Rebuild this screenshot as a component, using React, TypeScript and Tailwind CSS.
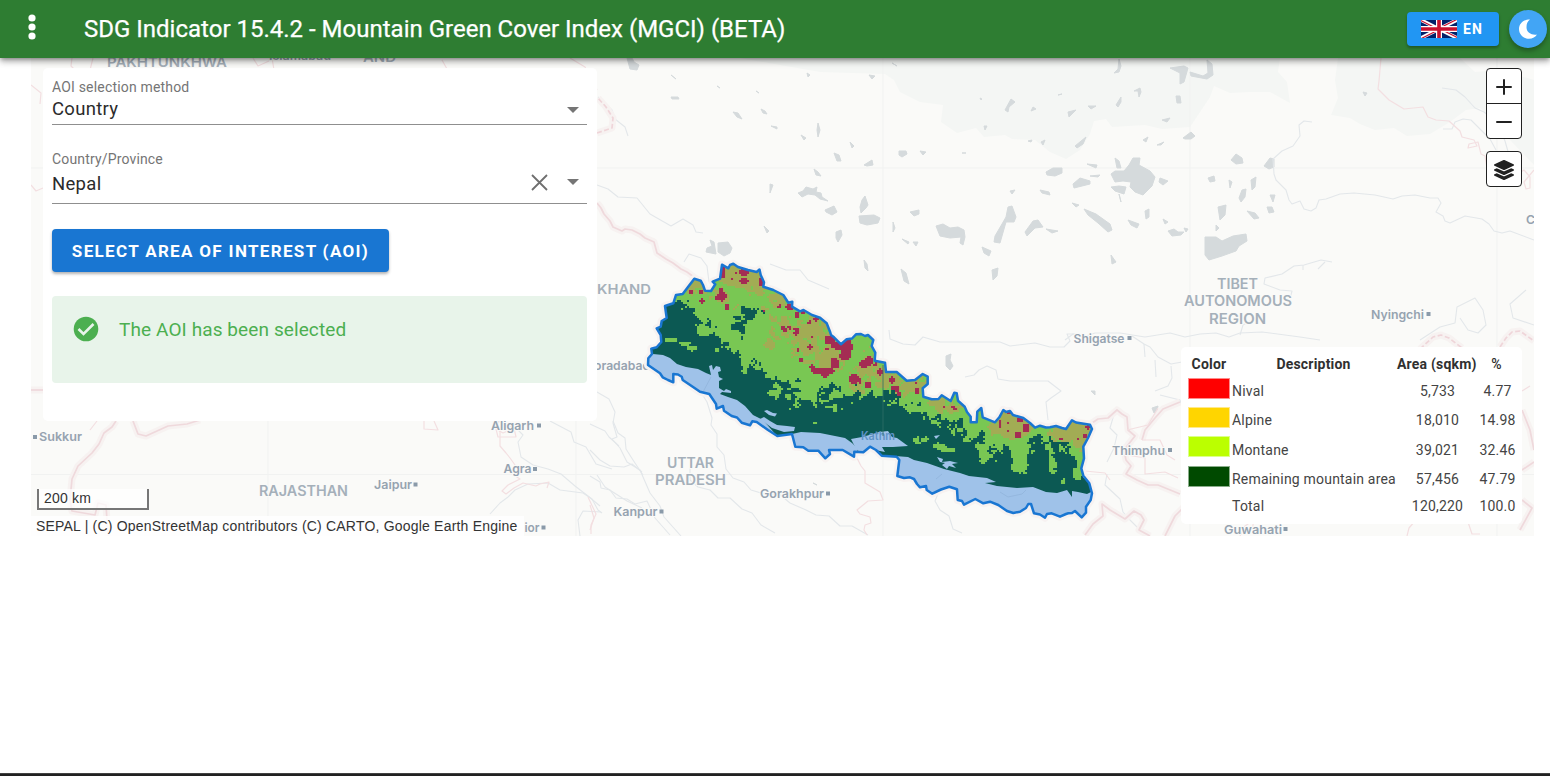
import React from "react";

type Pt = [number, number];

const NEPAL =
  "648,365 648.3,358.3 652,354 651.3,348.7 656.7,347.3 661.3,342 660.7,335 656.7,328.3 660.7,326.7 661.7,321 666.7,318 665,306 673.3,303.3 676,295 682.7,294 688,287 694.3,278.7 700.7,280.7 703,285 705,290.7 711,291 715.3,284.3 712.7,281.7 720,278.7 722,264.7 728.3,268.3 730,265 733.3,263.7 738,267 748,270 756.7,272 759.5,269.5 760.7,275 764,282.3 763.3,286.7 773.3,290 783.3,295 788.3,302.7 792.3,301.7 792,306.7 800,311.3 803.5,310 812,315 820,317.7 826.7,323.3 830,331.7 831,335 834,337.3 841,344.3 846.7,339.3 852,338.5 856,334.3 861,334 865,336 868,335 873.3,340 871.7,346 875.3,352.7 874.7,360.7 885,362.7 886,372 896.7,372 906.7,380.7 915,380 922.7,374 927.7,376.7 927.7,384 922.7,388.3 923.3,396.7 931.7,399.3 938.5,399 941.7,395.3 950.7,401 954.3,392.7 956.7,393.3 958,400.7 964.7,406.7 967,412 970.7,416.7 970.7,422.3 976.7,422.3 977.3,411.7 981.3,408 982.7,417.3 995,422.3 999.3,417.3 1003.3,410 1006,412 1010,411 1013,415 1023.3,418 1030,423 1035,427.7 1040,425.7 1046,427.5 1050,427.3 1056,426 1062,428 1066,429 1072,420.3 1076,422.5 1090,424.7 1092,429 1088,438 1083.3,446.7 1084,458.3 1081.3,468.3 1083.3,475.7 1089.3,483.3 1092,493.3 1090.7,500 1086,506.7 1086,512.7 1081.7,517.3 1075,511 1072,513 1068.3,513.3 1066,514 1060,516.7 1051.7,513.3 1047,514 1045,517.7 1040,514.5 1034,513.3 1031,504 1028.3,504 1026,508 1020,511.7 1013.3,513 1007,511 998.3,505 990,501.7 983.3,503.3 975.3,499 964,504.7 962,501 957.7,500 957,489.3 949.3,486.7 941,489.5 932.3,493.7 926.7,490 926,486 920,487.3 917,484 914,479 910,477.3 904,478 897.3,476 899.3,460 896.7,456.7 881.7,455.7 876,450 870,446.7 863.3,452.3 854.3,451.7 854,456.7 842.7,450 829,450 830,454 825.3,458.3 818.3,450.7 808.3,450.7 803.3,447.3 795.3,446.7 792,434 777.3,436 768,430 756.7,422 752.3,421.3 750,425.3 741.7,422.7 737,417.5 731.7,416 724,410.7 723,406 716.7,408.7 716,404 709.3,394 700,391.7 692.7,386.7 682.7,380 681.7,376.7 678,374.5 673.3,374 673.3,382.3 668,380 662.7,377.3 660,373.3";

const LOWLAND =
  "640,350 653,354 663,355 670,358 677,364 686,367 698,369 706,373 711,375 709,366 712,365 713,370 716,366 720,367 721,371 718,372 719,377 723,379 719,381 719,388 724,391 726,389 731,391 731,393 722,392 720,394 728,397 737,400 745,406 753,415 763,420 777,436 777,445 640,445";

const lowlands = [
  LOWLAND,
  "764,411 767,410 773,413 777,413.5 775,416.500 769,415",
  "760,419 764,417 770,421 777,425 787,426 795,427 794,431 784,432 772,428",
  "792,434 801,432 820,433 830,435 845,438 852,443 858,449 855,460 792,460",
  "851,439 862,437 873,434 879,432 888,431 892,437 897,438 908,446 893,447 882,447 885,452 875,450 869,447 861,454 855,447",
  "895,456 908,457 914,460 927,463 944,469 960,473 969,476 987,478 996,482 985,483 997,486 1017,488 1033,487 1046,492 1057,493 1067,490 1072,497 1072,491 1078,492 1087,494 1097,489 1097,524 890,524",
  "937,457 943,459 942,462 950,461 958,463 952,464 956,468 949,466 947,469 942,465 945,463 940,462",
  "934,436 940,435 936,439",
];

const greenEdge: Pt[] = [
  [640, 292], [665, 299], [680, 303], [690, 312], [700, 327], [712, 335], [720, 340], [735, 350], [745, 363],
  [760, 368], [770, 372], [775, 393], [800, 397], [820, 402], [840, 395], [860, 393], [880, 397], [900, 402],
  [920, 413], [930, 419], [950, 422], [965, 430], [975, 443], [982, 458], [990, 453], [1010, 453], [1018, 470],
  [1025, 466], [1030, 447], [1040, 440], [1047, 446], [1050, 468], [1057, 450], [1068, 445], [1076, 468], [1096, 482],
];

type Blob = [number, number, number, number, number];

const darkBlobs: Blob[] = [
  [750, 313, 14, 8, 0.56], [739, 325, 9, 14, 0.6], [708, 325, 10, 6, 0.5], [785, 382, 14, 8, 0.5],
  [828, 388, 10, 6, 0.5], [690, 310, 10, 6, 0.5], [955, 425, 24, 8, 0.55], [978, 437, 9, 9, 0.5],
  [1002, 456, 12, 9, 0.65], [1036, 452, 9, 15, 0.7], [1066, 462, 10, 13, 0.6], [1054, 443, 8, 6, 0.5],
];

const greenBlobs: Blob[] = [
  [671, 340, 8, 1, 1], [685, 343.5, 6, 1.5, 1], [692, 348, 4.5, 2.5, 0.9], [704, 331, 8, 4, 0.8], [921, 440, 8, 4, 0.55],
  [940, 446, 6, 3, 0.8], [948, 450, 6, 2, 0.9], [967, 438, 5, 9, 0.5], [774, 393, 6, 3, 0.9], [831, 407, 5, 1, 1], [835, 408, 0.8, 5, 1],
  [790, 409, 0.8, 1, 1], [815, 423, 0.8, 2, 1], [744, 371, 3, 3, 0.8], [1020, 467, 9, 5, 0.7], [1053, 466, 4, 7, 0.7],
  [1063, 483, 0.8, 6, 0.9], [1078, 474, 5, 5, 0.7], [984, 461, 5, 2, 0.6], [717, 350, 1, 1, 1], [842, 409, 1, 1, 1],
];

const oliveBlobs: Blob[] = [
  [740, 272, 24, 14, 1], [757, 284, 14, 12, 0.8], [783, 299, 17, 11, 0.7], [698, 288, 12, 9, 0.55],
  [718, 295, 12, 9, 0.55], [781, 326, 12, 13, 0.62], [798, 333, 15, 13, 0.65], [819, 327, 14, 14, 0.8],
  [810, 350, 20, 13, 0.65], [830, 357, 17, 15, 0.85], [767, 345, 7, 6, 0.5], [735, 308, 6, 4, 0.3],
  [770, 310, 9, 7, 0.5], [860, 380, 11, 13, 0.65], [870, 363, 9, 15, 0.75], [886, 378, 13, 11, 0.8],
  [903, 385, 14, 7, 0.65], [919, 384, 9, 9, 0.65], [897, 394, 12, 5, 0.5], [945, 405, 17, 8, 0.65],
  [1012, 424, 20, 14, 1], [997, 430, 10, 7, 0.6], [1062, 435, 14, 8, 0.75], [1080, 430, 12, 10, 1], [1082, 443, 8, 8, 0.8],
];

const redBlobs: Blob[] = [
  [744, 272, 4, 3, 1], [744, 281, 4, 3, 0.9], [723, 272, 1.5, 5, 1], [761, 282, 1.5, 3, 0.9], [721, 297, 5, 4, 0.6],
  [732, 279, 1, 1, 1], [701, 292, 1.5, 2, 1], [727, 307, 2, 2, 0.8], [702, 301, 2, 2, 0.7], [691, 292, 2, 1.5, 0.7],
  [721, 290, 1.5, 1.5, 1], [790, 307, 4, 2, 0.9], [797, 315, 1, 3, 1], [803, 312, 2, 2, 0.7], [816, 319, 3, 1.5, 0.8],
  [785, 329, 4, 3, 0.65], [796, 331, 2, 4, 0.6], [830, 340, 5, 4, 0.9], [838, 346, 6, 3, 0.9], [847, 347, 5, 7, 1],
  [845, 355, 5, 4, 0.9], [835, 363, 4, 5, 0.75], [823, 371, 11, 3, 0.75], [812, 367, 2, 1.5, 1], [825, 375, 4, 1.5, 0.8],
  [854, 379, 5, 4, 0.85], [865, 364, 5, 3, 0.9], [869, 361, 3.5, 4.5, 0.9], [868, 385, 3, 2, 1], [860, 381, 1, 3, 0.9],
  [880, 372, 1.5, 3, 1], [892, 380, 2, 3, 0.9], [895, 389, 3, 3, 0.9], [899, 394, 2, 2, 0.9], [916, 383, 1, 1, 1],
  [917, 391, 1, 2, 0.9], [944, 407, 1, 1, 1], [953, 407, 1, 1, 1], [1026, 428, 3, 3.5, 0.95], [1020, 420, 2, 2, 1],
  [1000, 424, 1, 4, 0.9], [1018, 435, 3, 2, 0.7], [1088, 427, 2, 2, 1], [1085, 436, 1, 1.5, 1], [1009, 413, 1.5, 1, 1],
  [810, 347, 2, 2, 0.6], [812, 337, 1, 1, 1], [798, 350, 1, 1, 1], [801, 360, 1.5, 1, 1],
];

const hash = (x: number, y: number) => {
  const v = Math.sin(x * 127.1 + y * 311.7) * 43758.5453;
  return v - Math.floor(v);
};

const smooth = (x: number, y: number) => {
  const ix = Math.floor(x);
  const iy = Math.floor(y);
  const fx = x - ix;
  const fy = y - iy;
  const top = hash(ix, iy) * (1 - fx) + hash(ix + 1, iy) * fx;
  const bottom = hash(ix, iy + 1) * (1 - fx) + hash(ix + 1, iy + 1) * fx;
  return top * (1 - fy) + bottom * fy;
};

const edgeAt = (x: number) => {
  for (let i = 1; i < greenEdge.length; i++) {
    if (x <= greenEdge[i][0]) {
      const [x0, y0] = greenEdge[i - 1];
      const [x1, y1] = greenEdge[i];
      return y0 + ((x - x0) / (x1 - x0)) * (y1 - y0);
    }
  }
  return greenEdge[greenEdge.length - 1][1];
};

const CELL = 2;

function inBlobs(blobs: Blob[], x: number, y: number, noise: number) {
  return blobs.some(([cx, cy, rx, ry, p]) => {
    const d = ((x - cx) / (rx + 0.5)) ** 2 + ((y - cy) / (ry + 0.5)) ** 2;
    return d < 1.1 && noise < p * (p === 1 ? 1.1 - d * 0.25 : 1.15 - d * 0.45);
  });
}

function buildCover() {
  let green = "";
  let olive = "";
  let red = "";
  for (let i = 0; i < 226; i++) {
    for (let j = 0; j < 124; j++) {
      const px = 645 + i * CELL;
      const py = 262 + j * CELL;
      const x = px + CELL / 2;
      const y = py + CELL / 2;
      const n = smooth(i / 2.1, j / 2.1) * 0.75 + hash(i + 71, j + 13) * 0.25;
      const edge = edgeAt(x) + (n - 0.5) * 30;
      let isGreen = y < edge;
      if (isGreen && inBlobs(darkBlobs, x, y, n * 1.1)) isGreen = false;
      if (inBlobs(greenBlobs, x, y, n)) isGreen = true;
      if (!isGreen) continue;
      const cell = `M${px} ${py}h2.05v2.05h-2.05z`;
      green += cell;
      const m = smooth(i / 1.9 + 40, j / 1.9 + 9) * 0.8 + hash(i + 5, j + 90) * 0.2;
      const r = smooth(i / 1.6 + 131, j / 1.6 + 57);
      if (inBlobs(redBlobs, x, y, m * 0.45 + r * 0.45)) red += cell;
      else if (inBlobs(oliveBlobs, x, y, m * 1.1)) {
        if (r > 0.9) red += cell;
        else olive += cell;
      }
    }
  }
  return { green, olive, red };
}

const cover = buildCover();

const lakes = [
  "627,58 630,69 637,70 639,65 634,62 632,58", "671,97 678,97 679,99 672,99", "733,112 738,113 742,119 737,117",
  "761,109 765,111 767,114 763,113", "771,126 777,127 777,129", "818,123 820,130 818,137 817,130", "801,135 806,138 804,140",
  "834,153 839,155 841,161 837,161", "850,142 854,146 852,148", "864,165 872,160 873,165 867,166",
  "814,169 818,172 821,176 816,175", "798,193 803,191 806,187 813,189 817,187 816,192 821,193 822,197 828,201 820,199 815,195 808,194 802,197",
  "770,184 773,185 770,193", "825,210 834,206 837,212 832,215 826,212", "862,200 865,196 868,205 866,208 861,213 860,207",
  "859,216 874,215 880,218 878,223 867,225 860,223", "836,232 841,230 842,235 838,242 836,238",
  "710,240 714,242 716,254 706,252 707,248 712,246", "718,243 728,242 732,248 730,253 724,256 718,252",
  "764,226 769,231 767,233", "864,260 867,264 868,271 865,268", "901,269 906,273 909,284 904,281",
  "899,151 906,151 907,154 902,157 899,155", "920,151 926,152 923,155", "910,212 919,210 919,214 914,216",
  "893,222 895,228 893,232", "902,239 909,242 908,244", "913,242 918,242 916,246", "936,226 943,224 950,228 958,227 964,230 965,237 963,245 960,243 961,237 950,238 940,236",
  "1008,207 1012,206 1016,217 1014,222 1006,222 1000,243 994,242 995,236 1002,224 1006,217",
  "1025,232 1033,221 1038,220 1043,227 1035,228 1027,236", "1046,229 1058,231 1052,233",
  "992,270 998,268 997,276 993,280", "982,247 991,251 989,256 984,253", "1046,172 1053,168 1062,168 1062,173 1055,176 1047,175",
  "1011,99 1015,102 1009,107 1008,112 1005,110", "980,98 982,99 981,100", "1033,107 1036,109 1031,111", "984,126 987,126 985,130",
  "1028,141 1032,140 1031,142", "1041,142 1045,140 1043,145", "1040,190 1049,192 1050,195 1042,193", "1010,191 1015,190 1012,194",
  "1119,59 1121,66 1119,72 1114,73 1118,69", "1170,68 1184,66 1188,68 1184,82 1180,84 1180,73",
  "1190,72 1203,76 1208,73 1207,60 1212,64 1213,75 1207,79 1191,76", "1134,91 1140,88 1141,92 1139,97 1138,91",
  "1176,96 1180,96 1181,103 1177,103", "1116,105 1121,97 1121,102 1118,107", "1088,106 1096,106 1091,109",
  "1068,112 1076,110 1069,117", "1162,120 1170,118 1167,122", "1075,146 1086,137 1083,144 1077,148",
  "1183,138 1191,132 1195,136 1191,139 1185,139", "1143,140 1148,137 1146,142", "1157,145 1164,142 1161,145",
  "1111,174 1115,171 1124,171 1129,165 1133,158 1140,158 1139,165 1150,171 1155,177 1152,186 1148,190 1143,195 1135,192 1130,187 1131,182 1123,181 1115,182",
  "1115,158 1119,161 1121,168 1117,168", "1111,187 1119,186 1126,187 1124,194 1115,191", "1119,194 1121,202",
  "1073,184 1080,178 1090,181 1090,184 1082,186 1074,188", "1087,164 1097,165 1096,168", "1090,176 1100,175 1098,177",
  "1160,178 1168,181 1163,185 1159,182", "1072,203 1079,205 1076,207", "1084,209 1096,214 1110,224 1112,230 1108,232 1098,223 1088,215",
  "1145,211 1149,209 1149,217 1146,219", "1128,220 1139,224 1137,228 1131,225", "1163,219 1168,222 1165,224",
  "1168,231 1174,229 1178,232 1184,232 1181,235 1172,236", "1184,228 1188,229 1186,232",
  "1231,160 1236,154 1242,158 1243,163 1236,164", "1264,166 1270,158 1274,159 1274,167 1269,169",
  "1208,178 1214,176 1215,181 1210,182", "1229,180 1232,182 1230,188", "1251,180 1256,177 1255,187 1252,190",
  "1242,190 1246,189 1245,197 1241,202 1239,198", "1270,195 1275,195 1273,202", "1267,207 1272,207 1274,212 1269,213",
  "1218,207 1226,205 1225,215 1220,220", "1247,211 1255,213 1259,218 1254,219", "1216,225 1219,228 1216,231",
  "1205,237 1216,237 1222,241 1233,236 1246,234 1247,241 1239,246 1236,251 1222,256 1209,260 1205,255",
  "1111,255 1116,262 1112,264", "1363,92 1367,93 1365,96", "946,356 951,354 950,360 953,366 950,370 946,366", "1091,391 1095,391 1095,395",
  "1152,408 1158,406 1157,411 1154,413", "807,73 810,75 808,77", "869,75 875,76 872,79", "892,63 897,66", "671,75 676,79",
  "717,86 720,88", "756,91 759,93", "1058,95 1062,94", "962,153 966,153", "813,483 817,485",
];

const rivers = [
  "597,185 608,189 618,197 637,198 650,214 671,226 683,219 693,225 696,232 703,233",
  "684,262 689,254 701,258 707,266 709,282", "770,264 786,270 800,270 808,280 829,289",
  "598,97 605,103 612,110 615,119 625,127 628,136",
  "702,394 707,402 712,418 711,425 717,434 717,447 724,455 726,469 733,478 744,482 751,490 768,495 778,493 790,503 806,510 816,515 829,516 840,526 852,526 868,535",
  "590,388 609,399 615,412 613,423 617,437 612,439 620,448 627,462 640,470 650,493 660,506 664,517 681,536",
  "590,424 605,431 609,437 619,446", "590,450 600,460 610,466 624,467 632,464 642,472",
  "590,476 600,482 601,488 610,490 616,498 627,499 635,504 647,501 655,518 670,535",
  "690,468 690,480 698,487 710,490 718,498 730,498 742,509 752,513 761,525 775,533",
  "498,421 518,430 523,435 518,442 521,457 533,465 548,469 561,474 575,486 588,496 600,506",
  "550,421 571,432 574,442 586,447 596,464 612,469", "597,475 605,487 627,501 642,508",
  "490,514 500,503 508,497 515,490 528,484 548,483 560,490 583,493 592,499 598,510 602,513",
  "613,421 618,433 625,438 626,449 633,460 643,475", "580,536 578,520 583,511 601,512",
  "936,479 942,484 935,501 940,510 949,516 953,529 962,533",
  "889,330 890,339 903,344 915,345 923,337 940,342 1000,342 1010,346 1035,343 1050,347 1064,347 1070,341 1067,334 1080,334",
  "1065,340 1073,334 1083,337 1095,333 1120,333 1145,337 1170,333 1185,337 1200,334 1216,333 1229,337 1240,333 1262,332 1300,337 1320,340",
  "965,377 974,375 979,370 987,366 996,370 998,379 1010,381 1048,381 1061,391 1051,398 1046,402 1048,420",
  "1312,122 1304,121 1299,125 1300,136 1293,146 1282,151 1273,159 1274,174 1276,180 1286,190 1289,200 1292,204 1300,201 1304,209 1311,211 1316,208 1319,200 1326,199 1340,194 1354,193 1375,195 1393,199 1402,196 1415,195 1430,198 1438,198 1441,203 1436,212 1443,216 1445,221 1450,223 1465,216 1482,219 1489,224 1494,231 1502,233 1510,231 1534,240",
  "1442,88 1456,90 1465,97 1475,108 1484,112 1497,122 1505,141 1509,155",
  "1443,129 1452,129 1455,122 1463,119 1471,120 1480,129 1490,139 1496,150",
  "1332,262 1321,260 1304,265 1294,266 1282,274 1265,278 1264,284 1280,290 1292,291 1290,299",
  "1240,335 1243,325 1250,321", "1303,265 1303,270", "1325,262 1318,269",
  "1420,340 1440,327 1455,323 1457,307 1469,301 1475,298 1483,310 1486,325 1478,333 1468,330 1460,318",
  "1132,336 1144,344 1150,347 1158,357 1171,364 1182,362", "1144,344 1145,357", "1171,366 1172,378 1168,386 1155,391",
  "1155,360 1156,377", "1115,411 1110,428 1117,435 1114,448 1107,462", "1107,474 1105,485 1120,499 1123,512 1130,520 1142,532",
  "1160,395 1180,400 1184,412", "1526,290 1510,304 1513,318 1534,325",
];

const bordersWide = [
  "116,421 112,427 104,433 99,444 92,453 78,466 72,479 70,500 72,511 95,515 98,503 106,505 108,536",
  "133,421 138,434 146,436 168,426 187,424 200,420",
  "31,390 43,390",
  "597,203 601,208 604,214 610,221 613,227 622,231 625,229 632,230 640,234 645,238 654,242 657,253 666,259 673,263 681,269 687,272 698,280",
  "1092,423 1098,419 1108,418 1117,410 1122,414 1127,417 1128,430 1135,436 1124,450 1126,460 1131,466 1126,474 1137,480 1148,485 1158,485 1180,494",
  "1142,440 1145,430 1155,418 1163,409 1180,402",
  "1085,535 1093,524 1103,516 1102,504 1110,510 1125,519 1134,511 1141,515 1144,520 1139,530 1150,536",
  "1165,536 1175,516 1187,504", "1522,410 1530,430 1534,450", "1522,470 1534,462", "1522,500 1532,508 1520,530",
];

const bordersDashed = [
  "597,133 606,130 612,128 613,118 606,107 598,98",
  "1420,349 1433,337 1441,335 1449,338 1462,348",
  "1500,347 1506,338 1512,332 1520,331 1527,336 1534,341",
];

const bordersThin = [
  "1381,58 1379,81 1378,89 1389,100 1404,109 1423,107 1428,117 1436,120 1449,121 1460,131 1462,137 1474,140 1477,146 1468,148 1469,144 1478,142 1481,154 1485,156 1487,168 1496,180",
  "1519,173 1524,170 1530,177 1530,188 1526,189 1524,182 1534,170", "857,458 861,466 865,471 865,483 880,492 883,500 868,501 857,510 860,514 870,517 871,523 865,525 864,530 867,535",
  "1085,471 1105,473 1110,480",
  "499,419 496,429 503,433 514,428 516,437 498,437 495,425", "496,425 500,432 500,446 506,453 510,458 515,465 512,474 520,479 508,485 502,491 506,494 514,488 523,483 536,486 540,484 549,482 547,488",
  "588,497 596,514 591,525 591,534",
  "424,421 424,429 438,430 434,421", "31,85 41,93 40,104", "93,58 90,70 102,75", "72,58 71,66 77,72", "442,60 447,69 456,70",
  "31,185 36,191 43,188", "1127,430 1148,425 1158,408", "1127,455 1145,458 1145,474 1165,472 1178,478", "1142,440 1160,440 1167,455 1175,460",
  "570,58 585,67 597,90", "253,58 258,66 269,61", "1522,391 1530,386", "1240,536 1245,526 1254,520 1252,530",
  "1407,536 1409,528 1415,521", "1468,522 1472,534 1480,534", "590,505 594,518 590,530", "97,421 90,430", "272,58 274,70 281,74",
];

interface Label {
  text: string;
  x: number;
  y: number;
  w: number;
  size: number;
  region?: boolean;
}

const labels: Label[] = [
  { text: "PAKHTUNKHWA", x: 107, y: 67, w: 120, size: 13, region: true },
  { text: "Islamabad", x: 269, y: 60, w: 62, size: 12 },
  { text: "AND", x: 363, y: 62, w: 33, size: 13, region: true },
  { text: "KHAND", x: 597, y: 294, w: 54, size: 13.5, region: true },
  { text: "oradabad", x: 594, y: 370, w: 56, size: 12 },
  { text: "TIBET", x: 1217, y: 289, w: 41, size: 14, region: true },
  { text: "AUTONOMOUS", x: 1184, y: 306, w: 108, size: 14, region: true },
  { text: "REGION", x: 1209, y: 323.5, w: 57, size: 14, region: true },
  { text: "UTTAR", x: 667, y: 467.5, w: 47, size: 14, region: true },
  { text: "PRADESH", x: 655, y: 484.5, w: 71, size: 14, region: true },
  { text: "RAJASTHAN", x: 259, y: 495.5, w: 89, size: 14, region: true },
  { text: "Sukkur", x: 39, y: 441, w: 43, size: 12 },
  { text: "Aligarh", x: 491, y: 429.5, w: 43, size: 12 },
  { text: "Agra", x: 503.5, y: 473, w: 28, size: 12 },
  { text: "Jaipur", x: 374, y: 488.5, w: 38, size: 12 },
  { text: "Kanpur", x: 613.5, y: 516, w: 44, size: 12 },
  { text: "Gorakhpur", x: 760, y: 497.5, w: 64, size: 12 },
  { text: "ior", x: 524.5, y: 532, w: 15, size: 12 },
  { text: "Shigatse", x: 1073.5, y: 343, w: 51, size: 12 },
  { text: "Nyingchi", x: 1371, y: 319, w: 53, size: 12 },
  { text: "Thimphu", x: 1112, y: 455, w: 53, size: 12 },
  { text: "Guwahati", x: 1224, y: 533.5, w: 58, size: 12 },
  { text: "C", x: 1526, y: 224, w: 9, size: 12 },
];

const towns: Pt[] = [
  [35, 437], [539, 425.5], [535, 469], [415.5, 484.5], [661.5, 511.5], [828, 493.5], [543.5, 527.5], [1129.5, 338],
  [1428.5, 314], [1170, 450], [1285.5, 529],
];

function BaseMap() {
  return (
    <svg className="block h-[478px] w-[1503px]" viewBox="31 58 1503 478" aria-hidden="true">
      <defs>
        <clipPath id="country">
          <polygon points={NEPAL} />
        </clipPath>
      </defs>
      <rect x="31" y="58" width="1503" height="478" fill="#fafaf8" />
      <path
        fill="#f4f6f4"
        d="M740 58L780 65L820 72L885 74L894 80L900 92L920 102L943 105L941 122L957 133L976 128L984 137L1005 135L1012 139L1035 140L1050 152L1066 159L1080 150L1090 134L1094 121L1106 119L1112 127L1145 125L1162 129L1190 127L1200 112L1210 97L1214 86L1230 93L1250 92L1270 92L1290 103L1287 82L1278 72L1280 58ZM1338 58L1335 80L1338 98L1331 115L1350 118L1360 124L1375 130L1394 128L1407 136L1430 134L1450 122L1466 110L1480 108L1497 122L1510 140L1534 165V80L1500 70L1475 72L1460 58Z"
      />
      <path d="M268 421V536M576 421V536M883 58V536M1190 58V536M1497 58V536M31 168H1534M31 474.500H1534" stroke="#f1f2f1" strokeWidth="1" />
      <g fill="#d5dadc" stroke="#d5dadc" strokeWidth="1" strokeLinejoin="round">
        {lakes.map((p) => (
          <polygon key={p} points={p} />
        ))}
      </g>
      <g fill="none" stroke="#e3e7ea" strokeWidth="1.1" strokeLinejoin="round">
        {rivers.map((p) => (
          <polyline key={p} points={p} />
        ))}
      </g>
      <g fill="none" strokeLinejoin="round">
        {bordersWide.map((p) => (
          <g key={p}>
            <polyline points={p} stroke="#f7f2f1" strokeWidth="7" />
            <polyline points={p} stroke="#efd9dc" strokeWidth="1.7" />
          </g>
        ))}
        {bordersDashed.map((p) => (
          <g key={p}>
            <polyline points={p} stroke="#f7f2f1" strokeWidth="7" />
            <polyline points={p} stroke="#efd5d9" strokeWidth="1.7" strokeDasharray="5 2.5" />
          </g>
        ))}
        {bordersThin.map((p) => (
          <polyline key={p} points={p} stroke="#f3dfe1" strokeWidth="1.2" />
        ))}
      </g>

      <g fontFamily="Inter, 'Open Sans', sans-serif" stroke="#fafaf8" strokeWidth="2" paintOrder="stroke" strokeLinejoin="round">
        {labels.map((l) => (
          <text
            key={l.text}
            x={l.x}
            y={l.y}
            fontSize={l.size}
            fontWeight={l.region ? 600 : 600}
            fill={l.region ? "#a5b0ba" : "#96a3b0"}
            textLength={l.w}
            lengthAdjust="spacingAndGlyphs"
          >
            {l.text}
          </text>
        ))}
      </g>
      {towns.map(([x, y]) => (
        <rect key={`${x}-${y}`} x={x - 2} y={y - 2} width="4" height="4" fill="#8a9aa9" />
      ))}

      <polygon points={NEPAL} fill="none" stroke="#f7f2f1" strokeWidth="8" strokeLinejoin="round" />
      <g clipPath="url(#country)">
        <polygon points={NEPAL} fill="#0c5953" />
        <g fill="#9fc2e9">
          {lowlands.map((p) => (
            <polygon key={p} points={p} />
          ))}
        </g>
        <path d="M711 377L703 392M936 479L942 474M1000 492L1008 497L1022 494L1026 490" fill="none" stroke="#94b7de" strokeWidth="1" />
        <path d={cover.green} fill="#79c753" />
        <path d={cover.olive} fill="#a2ac54" />
        <path d={cover.red} fill="#a42c53" />
        <text x="861" y="440" fontSize="12" fontWeight="600" fontFamily="Inter, sans-serif" fill="#5f93c6" textLength="34" lengthAdjust="spacingAndGlyphs">
          Kathm
        </text>
        <path d="M883 365V436" stroke="#2f7068" strokeWidth="0.8" />
      </g>
      <polygon points={NEPAL} fill="none" stroke="#1976d2" strokeWidth="2.5" strokeLinejoin="round" />
    </svg>
  );
}

function UnionJack() {
  return (
    <svg className="h-[18px] w-9" viewBox="0 0 60 30" preserveAspectRatio="none">
      <clipPath id="jack">
        <path d="M30 15H60V30ZM30 15V30H0ZM30 15H0V0ZM30 15V0H60Z" />
      </clipPath>
      <path d="M0 0H60V30H0Z" fill="#012169" />
      <path d="M0 0L60 30M60 0L0 30" stroke="#fff" strokeWidth="6" />
      <path d="M0 0L60 30M60 0L0 30" clipPath="url(#jack)" stroke="#c8102e" strokeWidth="4" />
      <path d="M30 0V30M0 15H60" stroke="#fff" strokeWidth="10" />
      <path d="M30 0V30M0 15H60" stroke="#c8102e" strokeWidth="6" />
    </svg>
  );
}

function Header() {
  return (
    <header className="relative z-10 flex h-[58px] items-center bg-[#2e7d32] pr-[3px] text-white shadow-[0_2px_4px_-1px_rgba(0,0,0,0.3),0_4px_6px_rgba(0,0,0,0.2),0_1px_10px_rgba(0,0,0,0.14)]">
      <button className="-mt-[4px] ml-[26px] flex h-10 w-3 items-center justify-center" aria-label="Menu">
        <svg width="12" height="28" viewBox="0 0 12 28" fill="#fff">
          <circle cx="6" cy="5" r="3.6" />
          <circle cx="6" cy="14" r="3.6" />
          <circle cx="6" cy="23" r="3.6" />
        </svg>
      </button>
      <h1 className="ml-[46px] whitespace-nowrap text-[24px] leading-[58px] [-webkit-text-stroke:0.25px_white]">
        SDG Indicator 15.4.2 - Mountain Green Cover Index (MGCI) (BETA)
      </h1>
      <div className="ml-auto flex items-center gap-[10px]">
        <button className="flex h-[34px] w-[92px] items-center gap-[6px] rounded-[4px] bg-[#2196f3] pl-[14px] text-[14px] font-bold tracking-[1.2px] shadow-[0_2px_3px_rgba(0,0,0,0.3)]">
          <UnionJack />
          EN
        </button>
        <button className="flex size-[38px] items-center justify-center rounded-full bg-[#42a5f5] shadow-[0_3px_5px_rgba(0,0,0,0.3)]" aria-label="Theme">
          <svg width="20" height="22" viewBox="0 0 20 22">
            <path d="M12 1.500C5.500 1.500 1 5.600 1 11s4.300 9.800 10 9.800c3.600 0 6.500-1.700 8-4.300-5 1-10.500-1.900-10.500-7.300C8.500 5.800 9.500 3.400 12 1.500Z" fill="#fff" />
          </svg>
        </button>
      </div>
    </header>
  );
}

function Caret() {
  return (
    <svg width="12" height="6" viewBox="0 0 12 6">
      <path d="M0 0H12L6 6Z" fill="#757575" />
    </svg>
  );
}

function AoiPanel() {
  return (
    <section className="absolute left-[12px] top-[10px] h-[353px] w-[554px] rounded-[5px] bg-white px-[9px] pr-[10px] pt-[10px]">
      <div className="h-[47px] border-b border-[#8f8f8f]">
        <div className="text-[14px] leading-[18px] tracking-[0.18px] text-[#757575]">AOI selection method</div>
        <div className="flex items-center justify-between pr-2 pt-px">
          <span className="text-[18.500px] leading-[25px] tracking-[0.3px] text-[#2b2b2b]">Country</span>
          <Caret />
        </div>
      </div>
      <div className="mt-[25px] h-[54px] border-b border-[#8f8f8f]">
        <div className="text-[14px] leading-[18px] tracking-[0.16px] text-[#757575]">Country/Province</div>
        <div className="mt-[2px] flex h-7 items-start pr-2">
          <span className="flex-1 text-[18.500px] leading-[28px] tracking-[0.3px] text-[#2b2b2b]">Nepal</span>
          <div className="flex h-6 items-center gap-[19px]">
            <svg width="17" height="17" viewBox="0 0 17 17">
              <path d="M1 1L16 16M16 1L1 16" stroke="#6f6f6f" strokeWidth="1.8" />
            </svg>
            <Caret />
          </div>
        </div>
      </div>
      <button className="mt-[25px] flex h-[43px] w-[337px] items-center justify-center whitespace-nowrap rounded-[4px] bg-[#1976d2] pt-[2px] text-[17px] font-bold tracking-[1.33px] text-white shadow-[0_2px_3px_rgba(0,0,0,0.3)]">
        SELECT AREA OF INTEREST (AOI)
      </button>
      <div className="mt-[24px] flex h-[87px] items-start gap-[20px] rounded-[4px] bg-[#e8f4ea] pl-[21px] pt-[20px] text-[#4caf50]">
        <svg width="26" height="26" viewBox="0 0 26 26">
          <circle cx="13" cy="13" r="12.300" fill="#4caf50" />
          <path d="M5.500 13L10.500 18L20.500 8" fill="none" stroke="#e8f4ea" strokeWidth="2.600" />
        </svg>
        <span className="pt-px text-[19px] leading-[26px] tracking-[0.1px]">The AOI has been selected</span>
      </div>
    </section>
  );
}

const legend = [
  { name: "Nival", area: "5,733", pct: "4.77", swatch: "bg-[#ff0000] outline-[#ff8a8a]" },
  { name: "Alpine", area: "18,010", pct: "14.98", swatch: "bg-[#ffd500] outline-[#ffe98a]" },
  { name: "Montane", area: "39,021", pct: "32.46", swatch: "bg-[#bbff00] outline-[#dcff8a]" },
  { name: "Remaining mountain area", area: "57,456", pct: "47.79", swatch: "bg-[#004a00] outline-[#8aad8a]" },
];

function Legend() {
  return (
    <section className="absolute left-[1150px] top-[289px] h-[177px] w-[341px] rounded-[5px] bg-white pl-[7px] pt-[6px] text-[14px] tracking-[0.2px] text-[#444]">
      <div className="grid h-[23px] grid-cols-[42px_167px_79px_41px] items-center text-center font-bold text-[#303030]">
        <span>Color</span>
        <span>Description</span>
        <span className="whitespace-nowrap">Area (sqkm)</span>
        <span className="font-medium">%</span>
      </div>
      {legend.map((row) => (
        <div key={row.name} className="grid h-[29.300px] grid-cols-[44px_166px_79px_41px] items-center text-center">
          <span className={`mb-[5px] ml-px h-[19px] w-10 outline outline-1 ${row.swatch}`} />
          <span className="whitespace-nowrap pt-[2px] text-left">{row.name}</span>
          <span className="pt-[2px]">{row.area}</span>
          <span className="pt-[2px]">{row.pct}</span>
        </div>
      ))}
      <div className="grid h-[26px] grid-cols-[44px_166px_79px_41px] items-center text-center">
        <span />
        <span className="text-left">Total</span>
        <span>120,220</span>
        <span>100.0</span>
      </div>
    </section>
  );
}

function MapControls() {
  return (
    <div className="absolute left-[1455px] top-[10px] flex w-9 flex-col gap-3">
      <div className="flex h-[71px] flex-col overflow-hidden rounded-[4px] border border-[#212121] bg-white">
        <button className="flex flex-1 items-center justify-center border-b border-[#212121] pt-[2px]" aria-label="Zoom in">
          <svg width="16" height="16" viewBox="0 0 16 16">
            <path d="M8 1V15M1 8H15" stroke="#212121" strokeWidth="2" strokeLinecap="round" />
          </svg>
        </button>
        <button className="flex flex-1 items-center justify-center pt-[2px]" aria-label="Zoom out">
          <svg width="16" height="16" viewBox="0 0 16 16">
            <path d="M1 8H15" stroke="#212121" strokeWidth="2" strokeLinecap="round" />
          </svg>
        </button>
      </div>
      <button className="flex size-9 items-center justify-center rounded-[4px] border border-[#212121] bg-white" aria-label="Layers">
        <svg className="mt-px" width="20" height="20" viewBox="0 0 512 512" fill="#212121">
          <path d="M12.410 148.020l232.940 105.670c6.800 3.090 14.490 3.090 21.290 0l232.940-105.670c16.550-7.510 16.550-32.520 0-40.030L266.650 2.310a25.607 25.607 0 0 0-21.290 0L12.410 107.980c-16.550 7.510-16.550 32.530 0 40.040zm487.180 88.280l-58.090-26.330-161.640 73.270c-7.560 3.430-15.590 5.170-23.860 5.170s-16.290-1.740-23.860-5.170L70.510 209.970l-58.100 26.330c-16.550 7.500-16.550 32.500 0 40l232.940 105.590c6.800 3.080 14.490 3.080 21.290 0L499.590 276.300c16.550-7.500 16.550-32.500 0-40zm0 127.800l-57.870-26.230-161.860 73.370c-7.560 3.430-15.590 5.170-23.860 5.170s-16.290-1.740-23.860-5.170L70.290 337.870 12.410 364.100c-16.550 7.500-16.550 32.500 0 40l232.940 105.590c6.800 3.080 14.490 3.080 21.290 0L499.590 404.100c16.550-7.500 16.550-32.500 0-40z" />
        </svg>
      </button>
    </div>
  );
}

export default function App() {
  return (
    <div className="flex h-[776px] w-[1550px] flex-col overflow-hidden bg-white font-['Roboto',sans-serif]">
      <Header />
      <main className="relative ml-[31px] h-[478px] w-[1503px] overflow-hidden">
        <BaseMap />
        <AoiPanel />
        <MapControls />
        <Legend />
        <div className="absolute bottom-0 left-0 flex flex-col items-start font-['Liberation_Sans',sans-serif] text-[#333]">
          <div className="mb-[6px] ml-[6px] h-[21px] w-[112px] border-2 border-t-0 border-[#777] bg-white/70 pl-[5px] text-[14px] leading-[19px] tracking-[0.2px]">
            200 km
          </div>
          <div className="h-5 w-[493px] whitespace-nowrap bg-white/85 pl-[5px] text-[14px] leading-[20px] tracking-[0.2px]">
            SEPAL | (C) OpenStreetMap contributors (C) CARTO, Google Earth Engine
          </div>
        </div>
      </main>
      <footer className="mt-auto h-[3px] border-t border-[#424242] bg-[#212121]" />
    </div>
  );
}
